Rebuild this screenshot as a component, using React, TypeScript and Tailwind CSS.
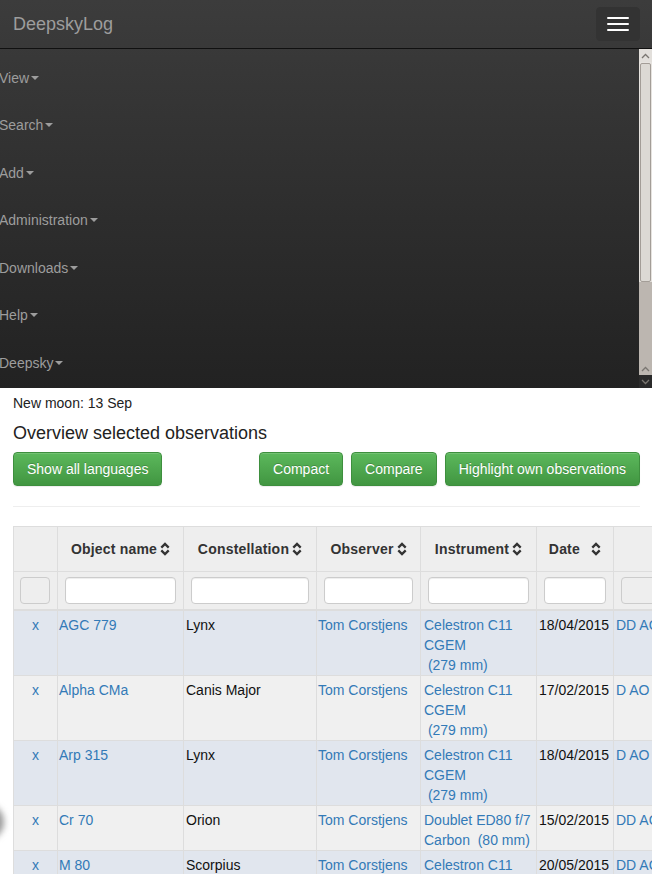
import React from 'react';

const menu = ['View', 'Search', 'Add', 'Administration', 'Downloads', 'Help', 'Deepsky', 'Comets', 'Language', 'Login'];

type Row = {
  object: string;
  constellation: string;
  instrument: string[];
  date: string;
  extra: string;
};

const rows: Row[] = [
  { object: 'AGC 779', constellation: 'Lynx', instrument: ['Celestron C11', 'CGEM', '\u00a0(279 mm)'], date: '18/04/2015', extra: 'DD AO' },
  { object: 'Alpha CMa', constellation: 'Canis Major', instrument: ['Celestron C11', 'CGEM', '\u00a0(279 mm)'], date: '17/02/2015', extra: 'D AO' },
  { object: 'Arp 315', constellation: 'Lynx', instrument: ['Celestron C11', 'CGEM', '\u00a0(279 mm)'], date: '18/04/2015', extra: 'D AO' },
  { object: 'Cr 70', constellation: 'Orion', instrument: ['Doublet ED80 f/7', 'Carbon\u00a0 (80 mm)'], date: '15/02/2015', extra: 'DD AO' },
  { object: 'M 80', constellation: 'Scorpius', instrument: ['Celestron C11', 'CGEM', '\u00a0(279 mm)'], date: '20/05/2015', extra: 'DD AO' },
];

function SortIcon() {
  return (
    <svg width="10" height="14" viewBox="0 0 10 14" className="inline-block ml-[3px] -mt-[2px] align-middle">
      <path d="M1.3 5.6 L5 1.9 L8.7 5.6" fill="none" stroke="#333" strokeWidth="2.3" />
      <path d="M1.3 8.4 L5 12.1 L8.7 8.4" fill="none" stroke="#333" strokeWidth="2.3" />
    </svg>
  );
}

function Chevron({ down }: { down?: boolean }) {
  return (
    <svg width="9" height="6" viewBox="0 0 9 6">
      <path d={down ? 'M1 1 L4.5 4.5 L8 1' : 'M1 5 L4.5 1.5 L8 5'} fill="none" stroke="#7a7671" strokeWidth="1.3" />
    </svg>
  );
}

function GreenButton({ children }: { children: React.ReactNode }) {
  return (
    <button className="h-[34px] px-[13px] rounded-[4px] border border-[#3e8f3e] bg-linear-to-b from-[#5cb85c] to-[#419641] text-white text-[14px] leading-[20px] [text-shadow:0_-1px_0_rgba(0,0,0,0.2)] shadow-[inset_0_1px_0_rgba(255,255,255,0.15),0_1px_1px_rgba(0,0,0,0.075)]">
      {children}
    </button>
  );
}

export default function App() {
  const headers = ['Object name', 'Constellation', 'Observer', 'Instrument'];

  return (
    <div className="relative h-[874px] overflow-hidden bg-white font-['Liberation_Sans',Arial,sans-serif] text-[14px] leading-[20px] text-[#333]">
      {/* Navbar */}
      <div className="relative bg-linear-to-b from-[#3c3c3c] to-[#222]">
        <div className="h-[49px] flex items-center justify-between pl-[13px] pr-[12px] border-b border-[#101010]">
          <span className="text-[18px] text-[#9d9d9d]">DeepskyLog</span>
          <button className="w-[44px] h-[34px] rounded-[4px] border border-[#333] bg-[#333] flex flex-col items-center justify-center gap-[4px]">
            <span className="block w-[22px] h-[2px] rounded-[1px] bg-white" />
            <span className="block w-[22px] h-[2px] rounded-[1px] bg-white" />
            <span className="block w-[22px] h-[2px] rounded-[1px] bg-white" />
          </button>
        </div>
        <div className="h-[339px] overflow-hidden">
          <div className="pt-[5px]">
            {menu.map((m) => (
              <div key={m} className="h-[47.5px] flex items-center -ml-[1px] text-[#9d9d9d]">
                {m}
                <span className="inline-block ml-[2px] w-0 h-0 border-x-[4px] border-x-transparent border-t-[4px] border-t-[#9d9d9d]" />
              </div>
            ))}
          </div>
        </div>

        {/* scrollbar of the collapsed menu */}
        <div className="absolute right-0 top-[49px] w-[13px] h-[339px] flex flex-col bg-[#bcb6b0]">
          <div className="h-[13px] flex items-center justify-center bg-[#e2dfdb]">
            <Chevron />
          </div>
          <div className="flex-1 px-[1px] pt-[1px] bg-[#e6e3df]">
            <div className="h-[219px] rounded-[2px] border border-[#a39d97] bg-[#dcd9d4]" />
            <div className="h-[80px] -mx-[1px] bg-[#bcb6b0]" />
          </div>
          <div className="h-[13px] flex items-center justify-center bg-[#bcb6b0]">
            <Chevron />
          </div>
          <div className="h-[13px] flex items-center justify-center bg-[#2a2a2a]">
            <Chevron down />
          </div>
        </div>
      </div>

      {/* Content */}
      <div className="pl-[13px] pr-[12px]">
        <div className="mt-[5px] text-[#222]">New moon: 13 Sep</div>
        <h4 className="mt-[10px] text-[18px] leading-[20px] text-[#222]">Overview selected observations</h4>
        <div className="mt-[9px] flex justify-between">
          <GreenButton>Show all languages</GreenButton>
          <div className="flex gap-[8px]">
            <GreenButton>Compact</GreenButton>
            <GreenButton>Compare</GreenButton>
            <GreenButton>Highlight own observations</GreenButton>
          </div>
        </div>
        <hr className="mt-[20px] border-0 border-t border-[#eee]" />

        <table className="mt-[19px] w-[860px] table-fixed border-collapse">
          <colgroup>
            <col className="w-[44px]" />
            <col className="w-[126px]" />
            <col className="w-[133px]" />
            <col className="w-[104px]" />
            <col className="w-[116px]" />
            <col className="w-[77px]" />
            <col className="w-[260px]" />
          </colgroup>
          <thead>
            <tr className="h-[45px] bg-[#eee]">
              <th className="border border-[#ddd]" />
              {headers.map((h) => (
                <th key={h} className="border border-[#ddd] text-center font-bold tracking-[0.2px] text-[#333] whitespace-nowrap">
                  {h}
                  <SortIcon />
                </th>
              ))}
              <th className="border border-[#ddd] text-center font-bold tracking-[0.2px] text-[#333] whitespace-nowrap">
                Date&nbsp;&nbsp;
                <SortIcon />
              </th>
              <th className="border border-[#ddd]" />
            </tr>
            <tr className="h-[38px] bg-[#eee] border-b-2 border-[#ddd]">
              <td className="border border-[#ddd] px-[6px]">
                <div className="h-[27px] w-[30px] rounded-[4px] border border-[#ccc] bg-[#eee]" />
              </td>
              {[0, 1, 2, 3, 4].map((i) => (
                <td key={i} className="border border-[#ddd] px-[7px]">
                  <input className="block h-[27px] w-full rounded-[4px] border border-[#ccc] bg-white shadow-[inset_0_1px_1px_rgba(0,0,0,0.075)]" />
                </td>
              ))}
              <td className="border border-[#ddd] px-[7px]">
                <div className="h-[27px] w-full rounded-[4px] border border-[#ccc] bg-[#eee]" />
              </td>
            </tr>
          </thead>
          <tbody>
            {rows.map((r, i) => (
              <tr key={r.object} className={i % 2 === 0 ? 'bg-[#e1e6ee]' : 'bg-[#f0f0f0]'}>
                <td className="border border-[#ddd] align-top pt-[4px] text-center text-[#337ab7]">x</td>
                <td className="border border-[#ddd] align-top pt-[4px] px-[1px] text-[#337ab7]">{r.object}</td>
                <td className="border border-[#ddd] align-top pt-[4px] px-[2px] text-[#111]">{r.constellation}</td>
                <td className="border border-[#ddd] align-top pt-[4px] px-[1px] text-[#337ab7] whitespace-nowrap">Tom Corstjens</td>
                <td className="border border-[#ddd] align-top pt-[4px] px-[3px] text-[#337ab7]">
                  {r.instrument.map((l) => (
                    <div key={l} className="whitespace-nowrap">{l}</div>
                  ))}
                </td>
                <td className="border border-[#ddd] align-top pt-[4px] px-[2px] text-[#111] whitespace-nowrap">{r.date}</td>
                <td className="border border-[#ddd] align-top pt-[4px] px-[2px] text-[#337ab7] whitespace-nowrap">{r.extra}</td>
              </tr>
            ))}
          </tbody>
        </table>
      </div>

      {/* floating round button partly off screen */}
      <div className="absolute left-[-32px] top-[804px] w-[36px] h-[36px] rounded-full bg-[#9a9a9a] blur-[3px]" />
    </div>
  );
}
